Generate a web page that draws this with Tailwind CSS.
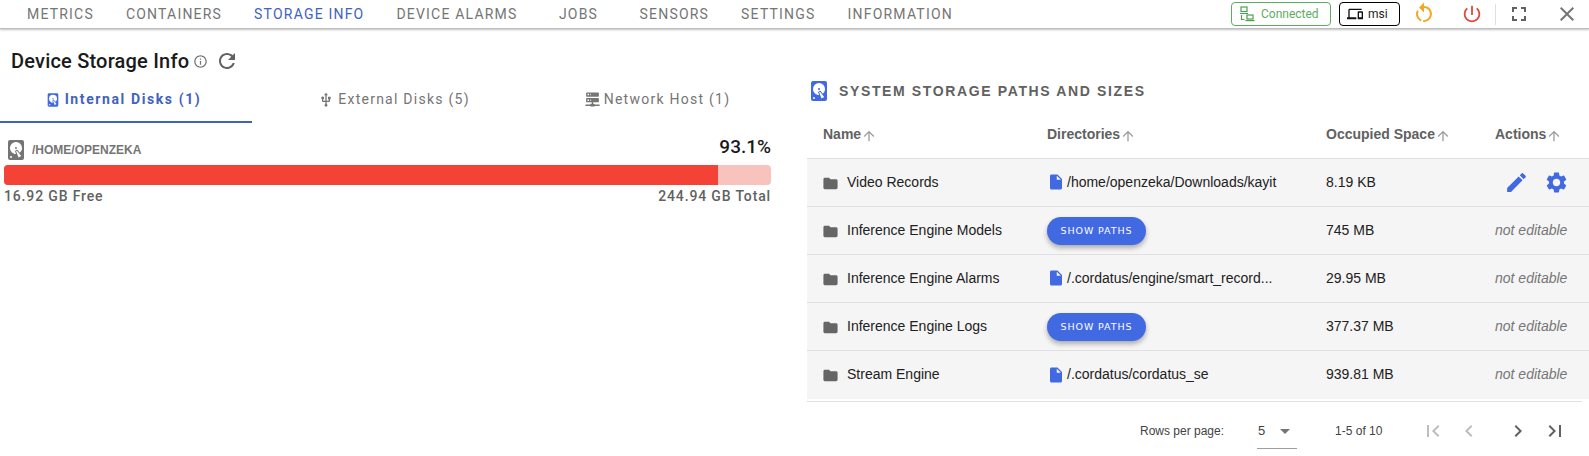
<!DOCTYPE html>
<html lang="en">
<head>
    <meta charset="UTF-8">
    <title>Device Storage Info</title>
    <script src="https://cdn.jsdelivr.net/npm/@tailwindcss/browser@4"></script>
</head>
<body class="bg-white w-[1589px] h-[456px] overflow-hidden font-['Liberation_Sans',sans-serif]">
    <!-- Top bar -->
    <header class="h-[29px] flex items-center bg-white border-b border-[#bdbdbd] shadow-[0_1px_2px_rgba(0,0,0,0.25)] pl-[11px]">
        <nav class="flex font-['Roboto',sans-serif] text-[14px] tracking-[1.2px] text-[#757575]">
            <a class="px-4 min-w-[90px] text-center">METRICS</a>
            <a class="px-4 min-w-[90px] text-center">CONTAINERS</a>
            <a class="px-4 min-w-[90px] text-center text-[#4262c0]">STORAGE INFO</a>
            <a class="px-4 min-w-[90px] text-center">DEVICE ALARMS</a>
            <a class="px-4 min-w-[90px] text-center">JOBS</a>
            <a class="px-4 min-w-[90px] text-center">SENSORS</a>
            <a class="px-4 min-w-[90px] text-center">SETTINGS</a>
            <a class="px-4 min-w-[90px] text-center">INFORMATION</a>
        </nav>
        <div class="ml-auto flex items-center">
            <div class="w-[100px] h-[24px] border border-[#5cad5f] rounded-[4px] flex items-center pl-[7px] gap-[6px] text-[12px] text-[#5cad5f] font-['Roboto',sans-serif]">
                <svg class="w-[16px] h-[16px]" viewBox="0 0 16 16" fill="none" stroke="#4c9f50" stroke-width="1.2"><rect x="2" y="1" width="6" height="4.5"/><path d="M1 7.5h8M2.5 9v4.5h3"/><rect x="8" y="9" width="6" height="4"/><path d="M6.5 14.6h9"/></svg>
                <span>Connected</span>
            </div>
            <div class="ml-[8px] w-[61px] h-[24px] border border-black rounded-[4px] flex items-center pl-[7px] gap-[5px] text-[12px] text-[#222] font-['Roboto',sans-serif]">
                <svg class="w-[16px] h-[16px]" viewBox="0 0 24 24" fill="#111"><path d="M4 6h18V4H4c-1.1 0-2 .9-2 2v11H0v3h14v-3H4V6zm19 2h-6c-.55 0-1 .45-1 1v10c0 .55.45 1 1 1h6c.55 0 1-.45 1-1V9c0-.55-.45-1-1-1zm-1 9h-4v-7h4v7z"/></svg>
                <span>msi</span>
            </div>
            <svg class="ml-[12px] w-[24px] h-[24px]" viewBox="0 0 24 24" fill="#f5a623"><path d="M12,4C14.1,4 16.1,4.8 17.6,6.3C20.7,9.4 20.7,14.5 17.6,17.6C15.8,19.5 13.3,20.2 10.9,19.9L11.4,17.9C13.1,18.1 14.9,17.5 16.2,16.2C18.5,13.9 18.5,10.1 16.2,7.7C15.1,6.6 13.5,6 12,6V10.6L7,5.6L12,0.6V4M6.3,17.6C3.7,15 3.3,11 5.1,7.9L6.6,9.4C5.5,11.6 5.9,14.4 7.8,16.2C8.3,16.7 8.9,17.1 9.6,17.4L9,19.4C8,19 7.1,18.4 6.3,17.6Z"/></svg>
            <svg class="ml-[25px] w-[22px] h-[22px]" viewBox="0 0 24 24" fill="#dd4b3e"><path d="M13 3h-2v10h2V3zm4.83 2.17l-1.42 1.42C17.99 7.86 19 9.81 19 12c0 3.87-3.13 7-7 7s-7-3.13-7-7c0-2.19 1.01-4.14 2.58-5.42L6.17 5.17C4.23 6.82 3 9.26 3 12c0 4.97 4.03 9 9 9s9-4.03 9-9c0-2.74-1.23-5.18-3.17-6.83z"/></svg>
            <div class="ml-[12px] w-px h-[21px] bg-[#e0e0e0]"></div>
            <svg class="ml-[11px] w-[24px] h-[24px]" viewBox="0 0 24 24" fill="#616161"><path d="M7 14H5v5h5v-2H7v-3zm-2-4h2V7h3V5H5v5zm12 7h-3v2h5v-5h-2v3zM14 5v2h3v3h2V5h-5z"/></svg>
            <svg class="ml-[24px] mr-[10px] w-[24px] h-[24px]" viewBox="0 0 24 24" fill="#757575"><path d="M19 6.41L17.59 5 12 10.59 6.41 5 5 6.41 10.59 12 5 17.59 6.41 19 12 13.41 17.59 19 19 17.59 13.41 12z"/></svg>
        </div>
    </header>

    <main class="flex">
        <!-- Left: disks -->
        <section class="w-[807px] shrink-0">
            <div class="flex items-center pl-[11px] h-[32px] mt-[16px]">
                <h1 class="font-['Roboto',sans-serif] font-medium text-[20px] tracking-[0.2px] text-[#1a1a1a]">Device Storage Info</h1>
                <svg class="ml-[4px] w-[15px] h-[15px]" viewBox="0 0 24 24" fill="#757575"><path d="M11 7h2v2h-2zm0 4h2v6h-2zm1-9C6.48 2 2 6.48 2 12s4.48 10 10 10 10-4.48 10-10S17.52 2 12 2zm0 18c-4.41 0-8-3.59-8-8s3.59-8 8-8 8 3.59 8 8-3.59 8-8 8z"/></svg>
                <svg class="ml-[7px] w-[24px] h-[24px]" viewBox="0 0 24 24" fill="#616161"><path d="M17.65 6.35C16.2 4.9 14.21 4 12 4c-4.42 0-7.99 3.58-7.99 8s3.57 8 7.99 8c3.73 0 6.84-2.55 7.73-6h-2.08c-.82 2.33-3.04 4-5.65 4-3.31 0-6-2.69-6-6s2.69-6 6-6c1.66 0 3.14.69 4.22 1.78L13 11h7V4l-2.35 2.35z"/></svg>
            </div>
            <div class="flex h-[47px] w-[776px] mt-[-1px] font-['Roboto',sans-serif] text-[14px] tracking-[1.25px] text-[#757575]">
                <div class="w-[252px] pt-[2px] pr-[6px] flex items-center justify-center gap-[4px] border-b-2 border-[#4262b5] text-[#4262c0] font-bold tracking-[1.6px]">
                    <svg class="w-[16px] h-[16px] shrink-0" viewBox="0 0 24 24" fill="#4169e1"><path d="M6,2H18A2,2 0 0,1 20,4V20A2,2 0 0,1 18,22H6A2,2 0 0,1 4,20V4A2,2 0 0,1 6,2M12,4A6,6 0 0,0 6,10C6,13.31 8.69,16 12.1,16L11.22,13.77C10.95,13.29 11.11,12.68 11.59,12.4L12.45,11.9C12.93,11.63 13.54,11.79 13.82,12.27L15.74,14.69C17.12,13.59 18,11.9 18,10A6,6 0 0,0 12,4M12,9A1,1 0 0,1 13,10A1,1 0 0,1 12,11A1,1 0 0,1 11,10A1,1 0 0,1 12,9M7,18A1,1 0 0,0 6,19A1,1 0 0,0 7,20A1,1 0 0,0 8,19A1,1 0 0,0 7,18M12.09,13.27L14.58,19.58L17.17,18.08L12.95,12.77L12.09,13.27Z"/></svg>
                    <span>Internal Disks (1)</span>
                </div>
                <div class="w-[286px] pr-[2px] flex items-center justify-center gap-[4px]">
                    <svg class="w-[16px] h-[16px] shrink-0" viewBox="0 0 24 24" fill="#757575"><path d="M15 7v4h1v2h-3V5h2l-3-4-3 4h2v8H8v-2.07c.7-.37 1.2-1.08 1.2-1.93 0-1.21-.99-2.2-2.2-2.2-1.21 0-2.2.99-2.2 2.2 0 .85.5 1.56 1.2 1.93V13c0 1.11.89 2 2 2h3v3.05c-.71.37-1.2 1.1-1.2 1.95 0 1.22.99 2.2 2.2 2.2 1.21 0 2.2-.98 2.2-2.2 0-.85-.49-1.58-1.2-1.95V15h3c1.11 0 2-.89 2-2v-2h1V7h-4z"/></svg>
                    <span>External Disks (5)</span>
                </div>
                <div class="w-[238px] flex items-center justify-center gap-[3px]">
                    <svg class="w-[17px] h-[17px] shrink-0" viewBox="0 0 24 24" fill="#757575"><path d="M13,18H14A1,1 0 0,1 15,19H22V21H15A1,1 0 0,1 14,22H10A1,1 0 0,1 9,21H2V19H9A1,1 0 0,1 10,18H11V16H4A1,1 0 0,1 3,15V11A1,1 0 0,1 4,10H20A1,1 0 0,1 21,11V15A1,1 0 0,1 20,16H13V18M4,2H20A1,1 0 0,1 21,3V7A1,1 0 0,1 20,8H4A1,1 0 0,1 3,7V3A1,1 0 0,1 4,2M9,6H10V4H9V6M9,14H10V12H9V14M5,4V6H7V4H5M5,12V14H7V12H5Z"/></svg>
                    <span>Network Host (1)</span>
                </div>
            </div>
            <div class="ml-[4px] w-[767px] mt-[15px]">
                <div class="flex items-center h-[24px]">
                    <svg class="w-[24px] h-[24px]" viewBox="0 0 24 24" fill="#757575"><path d="M6,2H18A2,2 0 0,1 20,4V20A2,2 0 0,1 18,22H6A2,2 0 0,1 4,20V4A2,2 0 0,1 6,2M12,4A6,6 0 0,0 6,10C6,13.31 8.69,16 12.1,16L11.22,13.77C10.95,13.29 11.11,12.68 11.59,12.4L12.45,11.9C12.93,11.63 13.54,11.79 13.82,12.27L15.74,14.69C17.12,13.59 18,11.9 18,10A6,6 0 0,0 12,4M12,9A1,1 0 0,1 13,10A1,1 0 0,1 12,11A1,1 0 0,1 11,10A1,1 0 0,1 12,9M7,18A1,1 0 0,0 6,19A1,1 0 0,0 7,20A1,1 0 0,0 8,19A1,1 0 0,0 7,18M12.09,13.27L14.58,19.58L17.17,18.08L12.95,12.77L12.09,13.27Z"/></svg>
                    <span class="ml-[4px] text-[12px] font-bold text-[#757575]">/HOME/OPENZEKA</span>
                    <span class="ml-auto -mt-[6px] font-['Roboto',sans-serif] font-medium text-[19px] text-[#1a1a1a]">93.1%</span>
                </div>
                <div class="mt-[3px] h-[20px] rounded-[4px] overflow-hidden bg-[#f8c3bd]">
                    <div class="h-full bg-[#f44336]" style="width: 93.1%"></div>
                </div>
                <div class="flex justify-between mt-[1px] font-['Roboto',sans-serif] font-medium text-[14px] tracking-[0.85px] text-[#616161]">
                    <span>16.92 GB Free</span>
                    <span>244.94 GB Total</span>
                </div>
            </div>
        </section>

        <!-- Right: storage paths table -->
        <section class="flex-1 min-w-0">
            <div class="flex items-center h-[24px] mt-[50px]">
                <svg class="w-[24px] h-[24px]" viewBox="0 0 24 24" fill="#4169e1"><path d="M6,2H18A2,2 0 0,1 20,4V20A2,2 0 0,1 18,22H6A2,2 0 0,1 4,20V4A2,2 0 0,1 6,2M12,4A6,6 0 0,0 6,10C6,13.31 8.69,16 12.1,16L11.22,13.77C10.95,13.29 11.11,12.68 11.59,12.4L12.45,11.9C12.93,11.63 13.54,11.79 13.82,12.27L15.74,14.69C17.12,13.59 18,11.9 18,10A6,6 0 0,0 12,4M12,9A1,1 0 0,1 13,10A1,1 0 0,1 12,11A1,1 0 0,1 11,10A1,1 0 0,1 12,9M7,18A1,1 0 0,0 6,19A1,1 0 0,0 7,20A1,1 0 0,0 8,19A1,1 0 0,0 7,18M12.09,13.27L14.58,19.58L17.17,18.08L12.95,12.77L12.09,13.27Z"/></svg>
                <h2 class="ml-[8px] text-[14px] font-bold tracking-[1.63px] text-[#616161]">SYSTEM STORAGE PATHS AND SIZES</h2>
            </div>
            <table class="mt-[7px] w-full table-fixed border-collapse text-[14px] text-[#212121]">
                <thead>
                    <tr class="h-[48px] text-[#616161] text-[14px] font-bold text-left border-b border-[#e0e0e0]">
                        <th class="w-[224px] pl-[16px] pt-[2px]"><span class="inline-flex items-center">Name<svg class="w-[16px] h-[16px] mt-[2px]" viewBox="0 0 24 24" fill="#9e9e9e"><path d="M4 12l1.41 1.41L11 7.83V20h2V7.83l5.58 5.59L20 12l-8-8-8 8z"/></svg></span></th>
                        <th class="w-[279px] pl-[16px] pt-[2px]"><span class="inline-flex items-center">Directories<svg class="w-[16px] h-[16px] mt-[2px]" viewBox="0 0 24 24" fill="#9e9e9e"><path d="M4 12l1.41 1.41L11 7.83V20h2V7.83l5.58 5.59L20 12l-8-8-8 8z"/></svg></span></th>
                        <th class="w-[169px] pl-[16px] pt-[2px]"><span class="inline-flex items-center">Occupied Space<svg class="w-[16px] h-[16px] mt-[2px]" viewBox="0 0 24 24" fill="#9e9e9e"><path d="M4 12l1.41 1.41L11 7.83V20h2V7.83l5.58 5.59L20 12l-8-8-8 8z"/></svg></span></th>
                        <th class="pl-[16px] pt-[2px]"><span class="inline-flex items-center">Actions<svg class="w-[16px] h-[16px] mt-[2px]" viewBox="0 0 24 24" fill="#9e9e9e"><path d="M4 12l1.41 1.41L11 7.83V20h2V7.83l5.58 5.59L20 12l-8-8-8 8z"/></svg></span></th>
                    </tr>
                </thead>
                <tbody>
                    <tr class="h-[48px] bg-[#f5f5f5] border-b border-[#e0e0e0]">
                        <td class="pl-[15px]"><span class="flex items-center gap-[8px]"><svg class="w-[17px] h-[17px] mt-[2px]" viewBox="0 0 24 24" fill="#666666"><path d="M10 4H4c-1.1 0-1.99.9-1.99 2L2 18c0 1.1.9 2 2 2h16c1.1 0 2-.9 2-2V8c0-1.1-.9-2-2-2h-8l-2-2z"/></svg>Video Records</span></td>
                        <td class="pl-[16px]"><span class="flex items-center gap-[2px]"><svg class="w-[18px] h-[18px]" viewBox="0 0 24 24" fill="#4169e1"><path d="M6 2c-1.1 0-1.99.9-1.99 2L4 20c0 1.1.89 2 1.99 2H18c1.1 0 2-.9 2-2V8l-6-6H6zm7 7V3.5L18.5 9H13z"/></svg>/home/openzeka/Downloads/kayit</span></td>
                        <td class="pl-[16px]">8.19 KB</td>
                        <td><span class="flex items-center gap-[15px] pl-[25px]"><svg class="w-[25px] h-[25px]" viewBox="0 0 24 24" fill="#4169e1"><path d="M3 17.25V21h3.75L17.81 9.94l-3.75-3.75L3 17.25zM20.71 7.04c.39-.39.39-1.02 0-1.41l-2.34-2.34c-.39-.39-1.02-.39-1.41 0l-1.83 1.83 3.75 3.75 1.83-1.83z"/></svg><svg class="w-[25px] h-[25px]" viewBox="0 0 24 24" fill="#4169e1"><path d="M19.14 12.94c.04-.3.06-.61.06-.94 0-.32-.02-.64-.07-.94l2.03-1.58c.18-.14.23-.41.12-.61l-1.92-3.32c-.12-.22-.37-.29-.59-.22l-2.39.96c-.5-.38-1.03-.7-1.62-.94l-.36-2.54c-.04-.24-.24-.41-.48-.41h-3.84c-.24 0-.43.17-.47.41l-.36 2.54c-.59.24-1.13.57-1.62.94l-2.39-.96c-.22-.08-.47 0-.59.22L2.74 8.87c-.12.21-.08.47.12.61l2.03 1.58c-.05.3-.09.63-.09.94s.02.64.07.94l-2.03 1.58c-.18.14-.23.41-.12.61l1.92 3.32c.12.22.37.29.59.22l2.39-.96c.5.38 1.03.7 1.62.94l.36 2.54c.05.24.24.41.48.41h3.84c.24 0 .44-.17.47-.41l.36-2.54c.59-.24 1.13-.56 1.62-.94l2.39.96c.22.08.47 0 .59-.22l1.92-3.32c.12-.22.07-.47-.12-.61l-2.01-1.58zM12 15.6c-1.98 0-3.6-1.62-3.6-3.6s1.62-3.6 3.6-3.6 3.6 1.62 3.6 3.6-1.62 3.6-3.6 3.6z"/></svg></span></td>
                    </tr>
                    <tr class="h-[48px] bg-[#f5f5f5] border-b border-[#e0e0e0]">
                        <td class="pl-[15px]"><span class="flex items-center gap-[8px]"><svg class="w-[17px] h-[17px] mt-[2px]" viewBox="0 0 24 24" fill="#666666"><path d="M10 4H4c-1.1 0-1.99.9-1.99 2L2 18c0 1.1.9 2 2 2h16c1.1 0 2-.9 2-2V8c0-1.1-.9-2-2-2h-8l-2-2z"/></svg>Inference Engine Models</span></td>
                        <td class="pl-[16px]"><button class="mt-[2px] w-[99px] h-[28px] rounded-full bg-[#4169e1] text-white text-[9.5px] tracking-[0.9px] font-['DejaVu_Sans',sans-serif] shadow-[0_3px_5px_rgba(0,0,0,0.3)]">SHOW PATHS</button></td>
                        <td class="pl-[16px]">745 MB</td>
                        <td class="pl-[16px] italic text-[#757575]">not editable</td>
                    </tr>
                    <tr class="h-[48px] bg-[#f5f5f5] border-b border-[#e0e0e0]">
                        <td class="pl-[15px]"><span class="flex items-center gap-[8px]"><svg class="w-[17px] h-[17px] mt-[2px]" viewBox="0 0 24 24" fill="#666666"><path d="M10 4H4c-1.1 0-1.99.9-1.99 2L2 18c0 1.1.9 2 2 2h16c1.1 0 2-.9 2-2V8c0-1.1-.9-2-2-2h-8l-2-2z"/></svg>Inference Engine Alarms</span></td>
                        <td class="pl-[16px]"><span class="flex items-center gap-[2px]"><svg class="w-[18px] h-[18px]" viewBox="0 0 24 24" fill="#4169e1"><path d="M6 2c-1.1 0-1.99.9-1.99 2L4 20c0 1.1.89 2 1.99 2H18c1.1 0 2-.9 2-2V8l-6-6H6zm7 7V3.5L18.5 9H13z"/></svg>/.cordatus/engine/smart_record...</span></td>
                        <td class="pl-[16px]">29.95 MB</td>
                        <td class="pl-[16px] italic text-[#757575]">not editable</td>
                    </tr>
                    <tr class="h-[48px] bg-[#f5f5f5] border-b border-[#e0e0e0]">
                        <td class="pl-[15px]"><span class="flex items-center gap-[8px]"><svg class="w-[17px] h-[17px] mt-[2px]" viewBox="0 0 24 24" fill="#666666"><path d="M10 4H4c-1.1 0-1.99.9-1.99 2L2 18c0 1.1.9 2 2 2h16c1.1 0 2-.9 2-2V8c0-1.1-.9-2-2-2h-8l-2-2z"/></svg>Inference Engine Logs</span></td>
                        <td class="pl-[16px]"><button class="mt-[2px] w-[99px] h-[28px] rounded-full bg-[#4169e1] text-white text-[9.5px] tracking-[0.9px] font-['DejaVu_Sans',sans-serif] shadow-[0_3px_5px_rgba(0,0,0,0.3)]">SHOW PATHS</button></td>
                        <td class="pl-[16px]">377.37 MB</td>
                        <td class="pl-[16px] italic text-[#757575]">not editable</td>
                    </tr>
                    <tr class="h-[49px] bg-[#f5f5f5]">
                        <td class="pl-[15px]"><span class="flex items-center gap-[8px]"><svg class="w-[17px] h-[17px] mt-[2px]" viewBox="0 0 24 24" fill="#666666"><path d="M10 4H4c-1.1 0-1.99.9-1.99 2L2 18c0 1.1.9 2 2 2h16c1.1 0 2-.9 2-2V8c0-1.1-.9-2-2-2h-8l-2-2z"/></svg>Stream Engine</span></td>
                        <td class="pl-[16px]"><span class="flex items-center gap-[2px]"><svg class="w-[18px] h-[18px]" viewBox="0 0 24 24" fill="#4169e1"><path d="M6 2c-1.1 0-1.99.9-1.99 2L4 20c0 1.1.89 2 1.99 2H18c1.1 0 2-.9 2-2V8l-6-6H6zm7 7V3.5L18.5 9H13z"/></svg>/.cordatus/cordatus_se</span></td>
                        <td class="pl-[16px]">939.81 MB</td>
                        <td class="pl-[16px] italic text-[#757575]">not editable</td>
                    </tr>
                </tbody>
            </table>
            <div class="w-[775px] h-[3px] border-b border-[#e0e0e0]"></div>
            <div class="flex items-center h-[58px] text-[12px] text-[#424242]">
                <span class="ml-[333px]">Rows per page:</span>
                <div class="ml-[33px] w-[40px] h-[36px] border-b border-[#9e9e9e] flex items-center justify-between">
                    <span class="pl-[1px] text-[13px]">5</span>
                    <svg class="w-[24px] h-[24px]" viewBox="0 0 24 24" fill="#757575"><path d="M7 10l5 5 5-5z"/></svg>
                </div>
                <span class="ml-[38px]">1-5 of 10</span>
                <svg class="ml-[39px] w-[24px] h-[24px]" viewBox="0 0 24 24" fill="#bdbdbd"><path d="M18.41 16.59L13.82 12l4.59-4.59L17 6l-6 6 6 6zM6 6h2v12H6z"/></svg>
                <svg class="ml-[12px] w-[24px] h-[24px]" viewBox="0 0 24 24" fill="#bdbdbd"><path d="M15.41 7.41L14 6l-6 6 6 6 1.41-1.41L10.83 12z"/></svg>
                <svg class="ml-[25px] w-[24px] h-[24px]" viewBox="0 0 24 24" fill="#616161"><path d="M10 6L8.59 7.41 13.17 12l-4.58 4.59L10 18l6-6z"/></svg>
                <svg class="ml-[13px] w-[24px] h-[24px]" viewBox="0 0 24 24" fill="#616161"><path d="M5.59 7.41L10.18 12l-4.59 4.59L7 18l6-6-6-6zM16 6h2v12h-2z"/></svg>
            </div>
        </section>
    </main>
</body>
</html>
